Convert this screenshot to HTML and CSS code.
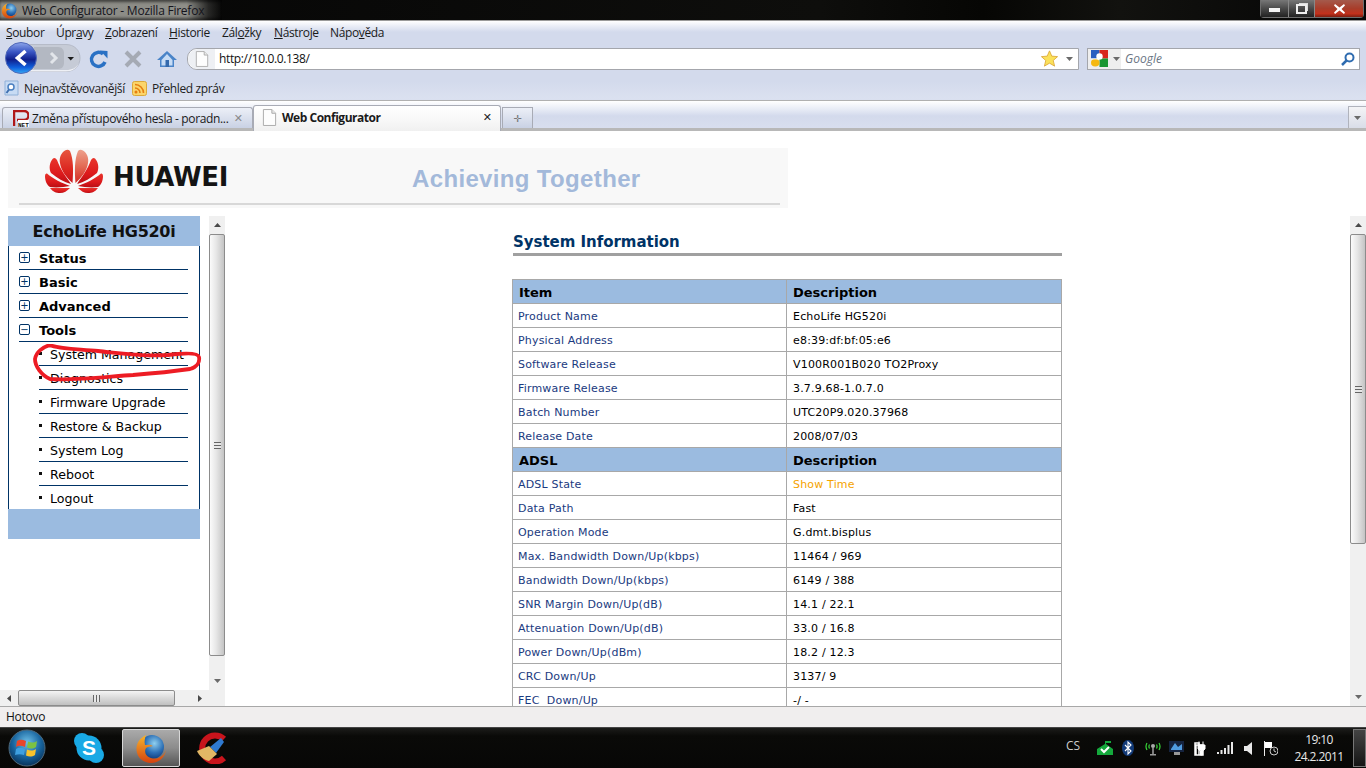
FILE: index.html
```html
<!DOCTYPE html>
<html lang="cs">
<head>
<meta charset="utf-8">
<title>Web Configurator - Mozilla Firefox</title>
<link rel="stylesheet" href="styles.css">
</head>
<body>
<svg class="defs" width="0" height="0">
  <defs>
    <radialGradient id="foxBlue" cx="60%" cy="35%" r="65%"><stop offset="0" stop-color="#8fd0f0"/><stop offset=".6" stop-color="#2c6fb5"/><stop offset="1" stop-color="#123f80"/></radialGradient>
    <linearGradient id="foxOrange" x1="0" y1="0" x2="0" y2="1"><stop offset="0" stop-color="#f7b52c"/><stop offset="1" stop-color="#d4420f"/></linearGradient>
    <linearGradient id="backBlue" x1="0" y1="0" x2="0" y2="1"><stop offset="0" stop-color="#8ea6ea"/><stop offset=".3" stop-color="#3a56c4"/><stop offset=".55" stop-color="#10208c"/><stop offset=".8" stop-color="#0f5fdc"/><stop offset="1" stop-color="#35a8f4"/></linearGradient>
    <linearGradient id="petal" x1="0" y1="0" x2="0" y2="1"><stop offset="0" stop-color="#e8352c"/><stop offset=".6" stop-color="#dd1a1c"/><stop offset="1" stop-color="#b90f14"/></linearGradient>
    <linearGradient id="petalMid" x1="0" y1="0" x2="0" y2="1"><stop offset="0" stop-color="#e7563f"/><stop offset=".6" stop-color="#dc2620"/><stop offset="1" stop-color="#c8141a"/></linearGradient>
    <linearGradient id="petalLight" x1="0" y1="0" x2="0" y2="1"><stop offset="0" stop-color="#eda08c"/><stop offset=".45" stop-color="#e4705a"/><stop offset="1" stop-color="#d42a22"/></linearGradient>
    <radialGradient id="orb" cx="50%" cy="35%" r="70%"><stop offset="0" stop-color="#6fc0e8"/><stop offset=".55" stop-color="#18659f"/><stop offset="1" stop-color="#062a4f"/></radialGradient>
    <symbol id="fox" viewBox="0 0 32 32">
      <circle cx="17" cy="15" r="12" fill="url(#foxBlue)"/>
      <path d="M11 3C5 6 1 11 1.500 18C2 26 9 31 16 31C24 31 30 25 31 18C29 24 24 27 18 26.500C12 26 9 21 10.500 17C12 14 16 15 18 14C15 12 12 13 10 13C9 9 10 6 11 3Z" fill="url(#foxOrange)"/>
    </symbol>
    <symbol id="page" viewBox="0 0 16 18">
      <path d="M1.500 .5H10.500L14.500 4.500V17.500H1.500Z" fill="#fdfdfd" stroke="#a9a9a9"/>
      <path d="M10.500 .5V4.500H14.500" fill="#e8e8e8" stroke="#a9a9a9"/>
    </symbol>
    <symbol id="drop" viewBox="0 0 7 4"><path d="M0 0H7L3.500 4Z" fill="#6a6a6a"/></symbol>
    <symbol id="up" viewBox="0 0 7 4"><path d="M0 4H7L3.500 0Z" fill="#4a4a4a"/></symbol>
  </defs>
</svg>

<header class="titlebar">
  <div class="title-glow">
    <svg class="ico16" width="17" height="17"><use href="#fox"/></svg>
    <span class="title-text">Web Configurator - Mozilla Firefox</span>
  </div>
  <div class="winbtns">
    <div class="winbtn"><span class="wb-min"></span></div>
    <div class="winbtn wb-mid"><span class="wb-max"></span></div>
    <div class="winbtn wb-close">
      <svg width="11" height="10" viewBox="0 0 11 10"><path d="M1 0L5.500 3.500L10 0L11 1.500L7.500 5L11 8.500L10 10L5.500 6.500L1 10L0 8.500L3.500 5L0 1.500Z" fill="#fff"/></svg>
    </div>
  </div>
</header>

<div class="chrome">
  <nav class="menubar">
    <span class="m m1"><u>S</u>oubor</span>
    <span class="m m2">Úpr<u>a</u>vy</span>
    <span class="m m3"><u>Z</u>obrazení</span>
    <span class="m m4"><u>H</u>istorie</span>
    <span class="m m5">Zál<u>o</u>žky</span>
    <span class="m m6"><u>N</u>ástroje</span>
    <span class="m m7">Nápo<u>v</u>ěda</span>
  </nav>
  <div class="navbar">
    <div class="backfwd">
      <svg width="77" height="33" viewBox="0 0 77 33">
        <path d="M18 2.500H62C70 2.500 76 8 76 16C76 24 70 29.500 62 29.500H18Z" fill="#c6cbd6" stroke="#b6bbc8"/>
        <path d="M20 29.500H62C68 29.500 73 26 75 21C72 26 68 28 62 28H20Z" fill="#eef0f5"/>
        <path d="M30 5H54C58 5 60 8 60 11V21C60 24 58 27 54 27H30Z" fill="#b3b8c2"/>
        <path d="M47 11L52 16L47 21" fill="none" stroke="#e2e5ea" stroke-width="3"/>
        <circle cx="17" cy="16" r="15.500" fill="url(#backBlue)" stroke="#5068b8"/>
        <path d="M21.500 9L13.500 16L21.500 23" fill="none" stroke="#fff" stroke-width="3.600"/>
        <path d="M63.500 15H70L66.750 18.500Z" fill="#1c1c1c"/>
      </svg>
    </div>
    <svg class="reload" width="20" height="20" viewBox="0 0 20 20"><path d="M16 13A7 7 0 1 1 14 5" fill="none" stroke="#2a71c4" stroke-width="3.500"/><path d="M11 1.500L18.500 2V9.500Z" fill="#2a71c4"/></svg>
    <svg class="stop" width="18" height="18" viewBox="0 0 18 18"><path d="M2 2L16 16M16 2L2 16" stroke="#a5aab4" stroke-width="4"/></svg>
    <svg class="home" width="20" height="18" viewBox="0 0 20 18"><path d="M10 1L0 10H3V17H17V10H20Z" fill="#4a84c8"/><path d="M4.500 10L10 4L15.500 10V15.500H4.500Z" fill="#c7dcf5"/><path d="M8.500 10H12V17H8.500Z" fill="#3469ad"/></svg>
    <div class="urlbar">
      <div class="identity"><svg width="14" height="16"><use href="#page"/></svg></div>
      <span class="urltext">http://10.0.0.138/</span>
      <svg class="star" width="17" height="17" viewBox="0 0 20 20"><path d="M10 1L12.700 7.200L19.500 7.800L14.400 12.300L16 19L10 15.500L4 19L5.600 12.300L.5 7.800L7.300 7.200Z" fill="#fbe15a" stroke="#dca83a"/></svg>
      <svg class="urldrop" width="7" height="4"><use href="#drop"/></svg>
    </div>
    <div class="searchbar">
      <div class="engine">
        <svg width="17" height="17" viewBox="0 0 16 16"><rect x="0" width="8" height="8" fill="#2a5fc0"/><rect x="8" width="8" height="8" fill="#d8261c"/><rect x="8" y="8" width="8" height="8" fill="#1a9632"/><ellipse cx="4" cy="12" rx="4" ry="3.500" fill="#f5b80f"/><circle cx="8" cy="6" r="3" fill="#fff"/><rect y="8" width="8" height=".8" fill="#fff"/></svg>
        <svg class="engine-drop" width="7" height="4"><use href="#drop"/></svg>
      </div>
      <span class="searchtext">Google</span>
      <svg class="mag" width="14" height="14" viewBox="0 0 14 14"><circle cx="8.500" cy="5.500" r="4" fill="none" stroke="#2f6cb0" stroke-width="2"/><path d="M5.500 8.500L1 13" stroke="#2f6cb0" stroke-width="2.500"/></svg>
    </div>
  </div>
  <div class="bookmarks">
    <svg class="bm-ico" width="15" height="16" viewBox="0 0 15 16"><path d="M1 1H14V15H1Z" fill="#c7dbf4" stroke="#8fb0d8"/><circle cx="7" cy="7" r="3" fill="#fff" stroke="#4a7fc0" stroke-width="1.500"/><path d="M5 9.500L2.500 13" stroke="#3e6fb0" stroke-width="2"/></svg>
    <span class="bm-text bm1">Nejnavštěvovanější</span>
    <svg class="bm-ico" width="15" height="15" viewBox="0 0 15 15"><rect x=".5" y=".5" width="14" height="14" rx="2" fill="#fbd56a" stroke="#dba93a"/><circle cx="4" cy="11" r="1.500" fill="#e67e10"/><path d="M3 7A5 5 0 0 1 8 12M3 3.500A8.500 8.500 0 0 1 11.500 12" fill="none" stroke="#e67e10" stroke-width="1.600"/></svg>
    <span class="bm-text">Přehled zpráv</span>
  </div>
</div>

<div class="tabstrip">
  <div class="tab tab-bg">
    <svg class="fav" width="16" height="17" viewBox="0 0 16 17"><path d="M1 16V1H11A4 4 0 0 1 11 10H4" fill="none" stroke="#b01818" stroke-width="2.500"/><rect x="5" y="10" width="11" height="7" fill="#fff"/><text x="5" y="16.500" class="fav-text">NET</text></svg>
    <span class="tab-title">Změna přístupového hesla - poradn...</span>
    <span class="tab-x tab-x-dim">✕</span>
  </div>
  <div class="tab tab-active">
    <svg class="fav" width="15" height="17"><use href="#page"/></svg>
    <span class="tab-title tab-title-b">Web Configurator</span>
    <span class="tab-x">✕</span>
  </div>
  <div class="tab-new"><span class="plus">✛</span></div>
  <div class="tab-list"><svg width="7" height="4"><use href="#drop"/></svg></div>
</div>

<main class="content">
  <div class="banner">
    <div class="banner-in">
      <svg class="hw-logo" width="58" height="45" viewBox="0 0 58 45">
        <g>
          <path d="M30.500 34C29.500 22 29.500 10 33 2Q35 0 38 1.500C42 4 44 9 43 14C42 22 36 29 30.500 34Z" fill="url(#petalLight)"/>
          <path d="M32 35C36 29 43 20 46 11Q48 8 50 9.500C54 14 54 20 52 24C46 29 39 33 32 35Z" fill="url(#petal)"/>
          <path d="M33 37C41 34 50 30 56 24.500Q58 24 58 27C58 32 56 36 53 38C46 39 39 38 33 37Z" fill="url(#petal)"/>
          <path d="M33 39H53C50 43 47 44 43 44C39 44 36 42 33 39Z" fill="url(#petal)"/>
        </g>
        <g transform="translate(58 0) scale(-1 1)">
          <path d="M30.500 34C29.500 22 29.500 10 33 2Q35 0 38 1.500C42 4 44 9 43 14C42 22 36 29 30.500 34Z" fill="url(#petalMid)"/>
          <path d="M32 35C36 29 43 20 46 11Q48 8 50 9.500C54 14 54 20 52 24C46 29 39 33 32 35Z" fill="url(#petal)"/>
          <path d="M33 37C41 34 50 30 56 24.500Q58 24 58 27C58 32 56 36 53 38C46 39 39 38 33 37Z" fill="url(#petal)"/>
          <path d="M33 39H53C50 43 47 44 43 44C39 44 36 42 33 39Z" fill="url(#petal)"/>
        </g>
      </svg>
      <span class="hw-name">HUAWEI</span>
      <span class="hw-slogan">Achieving Together</span>
    </div>
  </div>
  <div class="frames">
    <div class="leftframe">
      <div class="leftview">
        <div class="sidebar">
          <div class="side-head">EchoLife HG520i</div>
          <ul class="side-body">
            <li class="top"><span class="box">+</span>Status</li>
            <li class="top"><span class="box">+</span>Basic</li>
            <li class="top"><span class="box">+</span>Advanced</li>
            <li class="top"><span class="box">−</span>Tools</li>
            <li class="sub">System Management</li>
            <li class="sub">Diagnostics</li>
            <li class="sub">Firmware Upgrade</li>
            <li class="sub">Restore &amp; Backup</li>
            <li class="sub">System Log</li>
            <li class="sub">Reboot</li>
            <li class="sub last">Logout</li>
          </ul>
          <div class="side-foot"></div>
        </div>
        <svg class="scribble" width="170" height="40" viewBox="0 0 170 40"><path d="M17 1C10 3 3 8 2 15C2 22 8 31 17 35C40 37 80 32 100 31C125 29 150 26 157 25C164 23 167 18 166 13C165 8 150 9 135 11C110 13 85 9 65 7C45 5 25 5 17 1Z" fill="none" stroke="#ed1c24" stroke-width="3.800"/></svg>
      </div>
      <div class="vscroll">
        <div class="sb-btn"><svg width="7" height="4"><use href="#up"/></svg></div>
        <div class="vthumb vthumb-l"><span class="grip-h"></span></div>
        <div class="sb-track"></div>
        <div class="sb-btn"><svg width="7" height="4"><use href="#drop"/></svg></div>
      </div>
      <div class="hscroll">
        <div class="sb-btn-h"><svg width="4" height="7" viewBox="0 0 4 7"><path d="M4 0V7L0 3.500Z" fill="#4a4a4a"/></svg></div>
        <div class="hthumb"><span class="grip-v"></span></div>
        <div class="sb-track"></div>
        <div class="sb-btn-h"><svg width="4" height="7" viewBox="0 0 4 7"><path d="M0 0V7L4 3.500Z" fill="#4a4a4a"/></svg></div>
      </div>
      <div class="sb-corner"></div>
    </div>
    <div class="rightframe">
      <div class="rightview">
        <h1 class="sys-title">System Information</h1>
        <table class="info">
          <tr class="hd"><td>Item</td><td>Description</td></tr>
          <tr><td>Product Name</td><td>EchoLife HG520i</td></tr>
          <tr><td>Physical Address</td><td>e8:39:df:bf:05:e6</td></tr>
          <tr><td>Software Release</td><td>V100R001B020 TO2Proxy</td></tr>
          <tr><td>Firmware Release</td><td>3.7.9.68-1.0.7.0</td></tr>
          <tr><td>Batch Number</td><td>UTC20P9.020.37968</td></tr>
          <tr><td>Release Date</td><td>2008/07/03</td></tr>
          <tr class="hd"><td>ADSL</td><td>Description</td></tr>
          <tr><td>ADSL State</td><td class="state">Show Time</td></tr>
          <tr><td>Data Path</td><td>Fast</td></tr>
          <tr><td>Operation Mode</td><td>G.dmt.bisplus</td></tr>
          <tr><td>Max. Bandwidth Down/Up(kbps)</td><td>11464 / 969</td></tr>
          <tr><td>Bandwidth Down/Up(kbps)</td><td>6149 / 388</td></tr>
          <tr><td>SNR Margin Down/Up(dB)</td><td>14.1 / 22.1</td></tr>
          <tr><td>Attenuation Down/Up(dB)</td><td>33.0 / 16.8</td></tr>
          <tr><td>Power Down/Up(dBm)</td><td>18.2 / 12.3</td></tr>
          <tr><td>CRC Down/Up</td><td>3137/ 9</td></tr>
          <tr><td>FEC&nbsp; Down/Up</td><td>-/ -</td></tr>
        </table>
      </div>
      <div class="vscroll vscroll-r">
        <div class="sb-btn"><svg width="7" height="4"><use href="#up"/></svg></div>
        <div class="vthumb vthumb-r"><span class="grip-h"></span></div>
        <div class="sb-track"></div>
        <div class="sb-btn"><svg width="7" height="4"><use href="#drop"/></svg></div>
      </div>
    </div>
  </div>
</main>

<div class="statusbar">Hotovo</div>

<footer class="taskbar">
  <svg class="orb" width="38" height="38" viewBox="0 0 38 38">
    <circle cx="19" cy="19" r="18" fill="url(#orb)" stroke="#4f6a7c"/>
    <path d="M9 12C12 10 15 11 18 12L17 18C14 17 11 16 8 18Z" fill="#e8462a"/>
    <path d="M20 12.500C23 14 26 14 29 12L28 18C25 20 22 20 19 18.500Z" fill="#7cc242"/>
    <path d="M8 20C11 18 14 19 17 20L16 26C13 25 10 25 7 26Z" fill="#3ea0e0"/>
    <path d="M19 20.500C22 22 25 22 28 20L27 26C24 28 21 28 18 26.500Z" fill="#f9c32b"/>
  </svg>
  <svg class="skype" width="32" height="32" viewBox="0 0 32 32">
    <circle cx="9" cy="9" r="8" fill="#19a9e5"/><circle cx="23" cy="23" r="8" fill="#19a9e5"/><circle cx="16" cy="16" r="12.500" fill="#19a9e5"/>
    <text x="16" y="23" class="skype-s">S</text>
  </svg>
  <div class="task-active"><svg width="32" height="32"><use href="#fox"/></svg></div>
  <svg class="ccl" width="32" height="32" viewBox="0 0 32 32">
    <path d="M28 7A13 13 0 1 0 28 26" fill="none" stroke="#c8141c" stroke-width="6"/>
    <path d="M14 15L25 6L28 10L20 21Z" fill="#2f7ad0"/>
    <path d="M1 19L13 14L21 22L13 29C8 28 3 24 1 19Z" fill="#e2b765"/>
  </svg>
  <div class="tray">
    <span class="lang">CS</span>
    <svg class="t1" width="16" height="16" viewBox="0 0 16 16"><path d="M0 15V9L8 4V1H14V3H9V4L16 9V15Z" fill="#14a83c"/><path d="M4 9L7 12L12 7" fill="none" stroke="#fff" stroke-width="2"/></svg>
    <svg class="t2" width="12" height="16" viewBox="0 0 12 16"><ellipse cx="6" cy="8" rx="6" ry="8" fill="#123a78"/><path d="M3 5L9 11L6 14V2L9 5L3 11" fill="none" stroke="#fff" stroke-width="1.100"/></svg>
    <svg class="t3" width="16" height="16" viewBox="0 0 16 16"><path d="M2 3A7 7 0 0 0 2 10M14 3A7 7 0 0 1 14 10M4.500 4.500A4 4 0 0 0 4.500 8.500M11.500 4.500A4 4 0 0 1 11.500 8.500" fill="none" stroke="#38d838" stroke-width="1.200"/><circle cx="8" cy="6" r="2" fill="#aaa"/><path d="M7.200 7H8.800V14H7.200ZM5 14H11V15.500H5Z" fill="#999"/></svg>
    <svg class="t4" width="16" height="16" viewBox="0 0 16 16"><rect y="1" width="15" height="11" fill="#15233f"/><path d="M2 9L6 3L9 7L13 4V10H2Z" fill="#4f9be0"/><path d="M5 12H11V15H5Z" fill="#999"/></svg>
    <svg class="t5" width="14" height="16" viewBox="0 0 14 16"><path d="M1 3H5V15H1ZM2 5H9V15H2Z" fill="none" stroke="#fff" stroke-width="1.500"/><path d="M5 1.500V5M9 1.500V5M4 5H11V9L8.500 11V15H6.500V11L4 9Z" fill="#fff" stroke="#fff"/></svg>
    <svg class="t6" width="16" height="12" viewBox="0 0 16 12"><path d="M0 10H2V12H0ZM3.500 8H5.500V12H3.500ZM7 6H9V12H7ZM10.500 3H12.500V12H10.500ZM14 0H16V12H14Z" fill="#e8e8e8"/></svg>
    <svg class="t7" width="8" height="13" viewBox="0 0 8 13"><path d="M0 4H3L8 0V13L3 9H0Z" fill="#e8e8e8"/></svg>
    <svg class="t8" width="14" height="15" viewBox="0 0 14 15"><path d="M.5 0V15" stroke="#eee"/><path d="M1 1H8V7H1Z" fill="#fff"/><circle cx="10" cy="10" r="4" fill="none" stroke="#ccc"/><path d="M10 7.500V10L12 11" fill="none" stroke="#ccc"/></svg>
    <div class="clock"><span>19:10</span><span>24.2.2011</span></div>
    <div class="showdesk"></div>
  </div>
</footer>
</body>
</html>
```

FILE: styles.css
```css
* { box-sizing: border-box; }
html, body { margin: 0; padding: 0; }
body {
  width: 1366px; height: 768px; overflow: hidden;
  display: flex; flex-direction: column;
  background: #fff;
  font-family: "Open Sans", "Noto Sans", sans-serif;
  font-size: 12px; color: #111;
}
.defs { position: absolute; }
svg { display: block; flex: none; }

/* title bar */
.titlebar {
  height: 21px; flex: none; display: flex; justify-content: space-between;
  background: linear-gradient(90deg, #050505 0, #0e0e0c 60%, #060604 72%, #12120f 82%, #050505 100%);
  border-bottom: 1px solid #9a9a9a;
}
.title-glow {
  width: 222px; height: 20px; display: flex; align-items: center; padding-left: 1px; gap: 4px;
  background: linear-gradient(90deg, #8a8a84 0, #8e8e88 84%, rgba(60,60,58,.6) 94%, rgba(14,14,12,0) 100%);
  box-shadow: inset 0 3px 3px -1px rgba(0,0,0,.55), inset 0 -3px 3px -1px rgba(0,0,0,.55);
}
.title-text { font-size: 12px; color: #14141c; letter-spacing: -.02em; }
.winbtns { display: flex; margin-right: 2px; height: 18px; border: 1px solid #6e6e6e; border-top: 0; border-radius: 0 0 4px 4px; }
.winbtn { width: 28px; display: flex; align-items: center; justify-content: center; background: linear-gradient(#777 0, #4a4a4a 50%, #222 100%); border-right: 1px solid #888; }
.wb-mid { width: 26px; }
.wb-close { width: 48px; border-right: 0; background: linear-gradient(#a45a4c 0, #a83d2a 50%, #c2311c 80%, #7d1e10 100%); }
.wb-min { width: 11px; height: 4px; background: #f4f4f4; margin-top: 3px; }
.wb-max { width: 11px; height: 10px; border: 2px solid #eee; box-shadow: 2px -2px 0 -1px #ddd; }

/* chrome */
.chrome {
  height: 80px; flex: none;
  background: linear-gradient(#fff 0, #e6eaf5 6px, #d3daec 11px, #d3daec 60px, #dbe1f0 78px, #d8deee 80px);
  border-bottom: 1px solid #b0b0b0;
}
.menubar { height: 21px; display: flex; align-items: center; padding: 1px 0 0 6px; font-size: 12px; color: #1a1a1a; letter-spacing: -.03em; }
.m1 { width: 50px; } .m2 { width: 49px; } .m3 { width: 64px; } .m4 { width: 53px; } .m5 { width: 52px; } .m6 { width: 56px; }
.navbar { height: 33px; display: flex; align-items: center; padding-left: 4px; }
.backfwd { width: 77px; }
.reload { margin-left: 8px; }
.stop { margin-left: 15px; }
.home { margin-left: 15px; }
.urlbar { margin-left: 10px; width: 892px; height: 22px; display: flex; align-items: center; background: #fff; border: 1px solid #a4a6ac; border-radius: 10px 0 0 10px; }
.identity { width: 27px; height: 20px; display: flex; align-items: center; padding-left: 7px; background: #eef0f4; border-radius: 10px 0 0 10px; }
.urltext { margin-left: 4px; flex: 1; letter-spacing: -.03em; color: #111; }
.star { margin-right: 8px; }
.urldrop { margin-right: 5px; }
.searchbar { margin-left: 8px; width: 273px; height: 22px; display: flex; align-items: center; background: #fff; border: 1px solid #a4a6ac; }
.engine { width: 33px; height: 20px; padding-left: 3px; display: flex; align-items: center; gap: 5px; background: #eeeeee; }
.searchtext { margin-left: 4px; flex: 1; font-style: italic; color: #6a7584; }
.mag { margin-right: 4px; }
.bookmarks { height: 26px; display: flex; align-items: center; padding-left: 4px; letter-spacing: -.03em; color: #222; }
.bm-text { margin-left: 5px; }
.bm1 { width: 108px; }

/* tabs */
.tabstrip {
  height: 30px; flex: none; display: flex; align-items: flex-end; position: relative; padding-left: 2px;
  background: linear-gradient(#fff 0, #e8ecf6 8px, #d3daec 15px, #d8deee 26px);
  border-bottom: 3px solid #b8b8b8;
}
.tab { display: flex; align-items: center; border: 1px solid #a8abb5; border-bottom: 0; }
.tab-bg { width: 251px; height: 21px; padding: 0 9px 0 10px; background: linear-gradient(#eceff7, #c9d1e4); border-radius: 3px 3px 0 0; }
.tab-active { width: 248px; height: 26px; margin: 0 0 -3px 0; padding: 0 8px 3px 8px; background: linear-gradient(#fff, #f7f7f7 60%, #f0f0f0); border-radius: 3px 3px 0 0; }
.tab-title { margin-left: 3px; flex: 1; white-space: nowrap; letter-spacing: -.03em; color: #1a1a1a; }
.tab-title-b { margin-left: 5px; font-weight: 700; letter-spacing: -.04em; }
.tab-x { font-size: 11px; color: #222; font-family: "DejaVu Sans", sans-serif; }
.tab-x-dim { color: #8a8a8a; }
.fav-text { font: 700 6px "Liberation Mono", monospace; fill: #111; }
.tab-new { width: 31px; height: 21px; margin-left: 1px; display: flex; align-items: center; justify-content: center; border: 1px solid #a8abb5; border-bottom: 0; background: linear-gradient(#eceff7, #c9d1e4); }
.plus { color: #777; font-size: 10px; font-family: "DejaVu Sans", sans-serif; }
.tab-list { margin-left: auto; width: 18px; height: 22px; display: flex; align-items: center; justify-content: center; border: 1px solid #b0b3bc; border-right: 0; border-bottom: 0; background: linear-gradient(#f4f4f6, #d9dde8); }

/* content */
.content { height: 575px; flex: none; padding-top: 17px; background: #fff; overflow: hidden; }
.banner { margin-left: 8px; width: 780px; height: 60px; padding: 0 8px 3px 11px; background: #f8f8f8; }
.banner-in { height: 57px; display: flex; align-items: flex-start; border-bottom: 2px solid #d8d8d8; }
.hw-logo { margin: 1px 0 0 26px; }
.hw-name { margin: 13px 0 0 10px; width: 299px; font: 700 26px/32px "DejaVu Sans", Verdana, sans-serif; color: #141414; letter-spacing: -.35px; }
.hw-slogan { margin-top: 15px; font: 700 24px/32px "Liberation Sans", Arial, sans-serif; color: #a3b9da; letter-spacing: .35px; white-space: nowrap; }
.frames { margin-top: 8px; height: 490px; display: flex; }

/* left frame */
.leftframe { width: 225px; flex: none; display: grid; grid-template-columns: 209px 16px; grid-template-rows: 474px 16px; }
.leftview { position: relative; overflow: hidden; padding-left: 8px; }
.sidebar { width: 192px; font-family: "DejaVu Sans", Verdana, sans-serif; color: #000; }
.side-head { height: 30px; padding-top: 1px; background: #9bbbe0; text-align: center; font: 700 16px/30px "DejaVu Sans", Verdana, sans-serif; color: #111; letter-spacing: -.3px; }
.side-body { margin: 0; padding: 0 11px 0 10px; height: 263px; list-style: none; border-left: 1px solid #003366; border-right: 1px solid #003366; }
.top, .sub { height: 24px; padding-top: 2px; display: flex; align-items: center; border-bottom: 1px solid #003366; white-space: nowrap; }
.top { font-size: 13px; font-weight: 700; }
.box { width: 11px; height: 11px; margin: -2px 9px 0 0; display: flex; align-items: center; justify-content: center; border: 1px solid #003366; border-radius: 2px; font: 400 10px/9px "DejaVu Sans", sans-serif; color: #003366; }
.sub { margin-left: 20px; font-size: 12.600px; padding-left: 11px; position: relative; }
.sub::before { content: ""; position: absolute; left: 0; top: 10px; width: 3px; height: 3px; background: #111; }
.last { border-bottom: 0; padding-top: 1px; }
.side-foot { height: 30px; background: #9bbbe0; }
.scribble { position: absolute; left: 33px; top: 128px; }

/* scrollbars */
.vscroll { display: flex; flex-direction: column; background: #f0f0f0; }
.vscroll-r { width: 16px; flex: none; }
.sb-btn { height: 18px; flex: none; display: flex; align-items: center; justify-content: center; }
.sb-track { flex: 1; }
.vthumb { display: flex; align-items: center; justify-content: center; border: 1px solid #8c8c8c; border-radius: 2px; background: linear-gradient(90deg, #fbfbfb, #e6e6e6 45%, #c4c4c4); margin: 0; }
.vthumb-l { height: 422px; }
.vthumb-r { height: 310px; }
.grip-h { width: 7px; height: 7px; background: repeating-linear-gradient(#666 0 1px, #e8e8e8 1px 3px); }
.hscroll { display: flex; background: #f0f0f0; }
.sb-btn-h { width: 18px; flex: none; display: flex; align-items: center; justify-content: center; }
.hthumb { width: 157px; display: flex; align-items: center; justify-content: center; border: 1px solid #8c8c8c; border-radius: 2px; background: linear-gradient(#f4f4f4, #dcdcdc 45%, #c0c0c0); }
.grip-v { width: 7px; height: 7px; background: repeating-linear-gradient(90deg, #666 0 1px, #e8e8e8 1px 3px); }
.sb-corner { background: #f0f0f0; }

/* right frame */
.rightframe { flex: 1; display: flex; min-width: 0; }
.rightview { flex: 1; height: 490px; overflow: hidden; padding: 15px 0 0 287px; }
.sys-title { margin: 0 0 23px 1px; width: 549px; height: 25px; font: 700 15px/23px "DejaVu Sans", Verdana, sans-serif; color: #003366; letter-spacing: -.03px; border-bottom: 3px solid #a0a0a0; }
.info { border-collapse: collapse; width: 550px; table-layout: fixed; font: 11px "DejaVu Sans", Verdana, sans-serif; color: #000; letter-spacing: .18px; }
.info td { height: 24px; padding: 1px 6px 0; border: 1px solid #a8a8a8; white-space: nowrap; }
.info td:first-child { width: 274px; padding-left: 5px; color: #1a3a80; }
.info .hd td { background: #9bbbe0; color: #000; font-weight: 700; font-size: 13px; letter-spacing: 0; border-top-color: #a8a8a8; }
.info .hd td:first-child { padding-left: 6px; color: #000; }
.info .state { color: #f5a300; }

/* status */
.statusbar { height: 21px; flex: none; padding: 1px 0 0 6px; line-height: 18px; background: #f0eeee; border-top: 1px solid #a8a8a8; color: #111; letter-spacing: -.02em; }

/* taskbar */
.taskbar { height: 41px; flex: none; display: flex; align-items: center; background: linear-gradient(#1c1c1a 0, #0a0a08 20%, #070706); border-top: 1px solid #444; position: relative; }
.orb { margin-left: 8px; }
.skype { margin-left: 27px; }
.task-active { width: 58px; height: 38px; margin-left: 17px; display: flex; align-items: center; justify-content: center; border: 1px solid #d8d8d8; border-radius: 2px; background: linear-gradient(#aaa, #8c8c8c 50%, #555); }
.ccl { margin-left: 16px; }
.skype-s { font: 700 21px "Liberation Sans", sans-serif; fill: #fff; text-anchor: middle; }
.tray { margin-left: auto; height: 40px; display: flex; align-items: center; color: #e4e4e4; }
.lang { width: 30px; margin-right: 1px; font-size: 12px; color: #ccc; margin-bottom: 6px; }
.t1 { margin-right: 9px; }
.t2 { margin-right: 11px; }
.t3 { margin-right: 8px; }
.t4 { margin-right: 9px; }
.t5 { margin-right: 9px; }
.t6 { margin-right: 11px; }
.t7 { margin-right: 12px; }
.t8 { margin-right: 10px; }
.clock { width: 62px; display: flex; flex-direction: column; align-items: center; font-size: 12px; line-height: 17px; color: #e8e8e8; letter-spacing: -.05em; white-space: nowrap; }
.showdesk { width: 13px; height: 38px; margin-left: 3px; border: 1px solid #777; background: linear-gradient(#444, #151515); }
```
